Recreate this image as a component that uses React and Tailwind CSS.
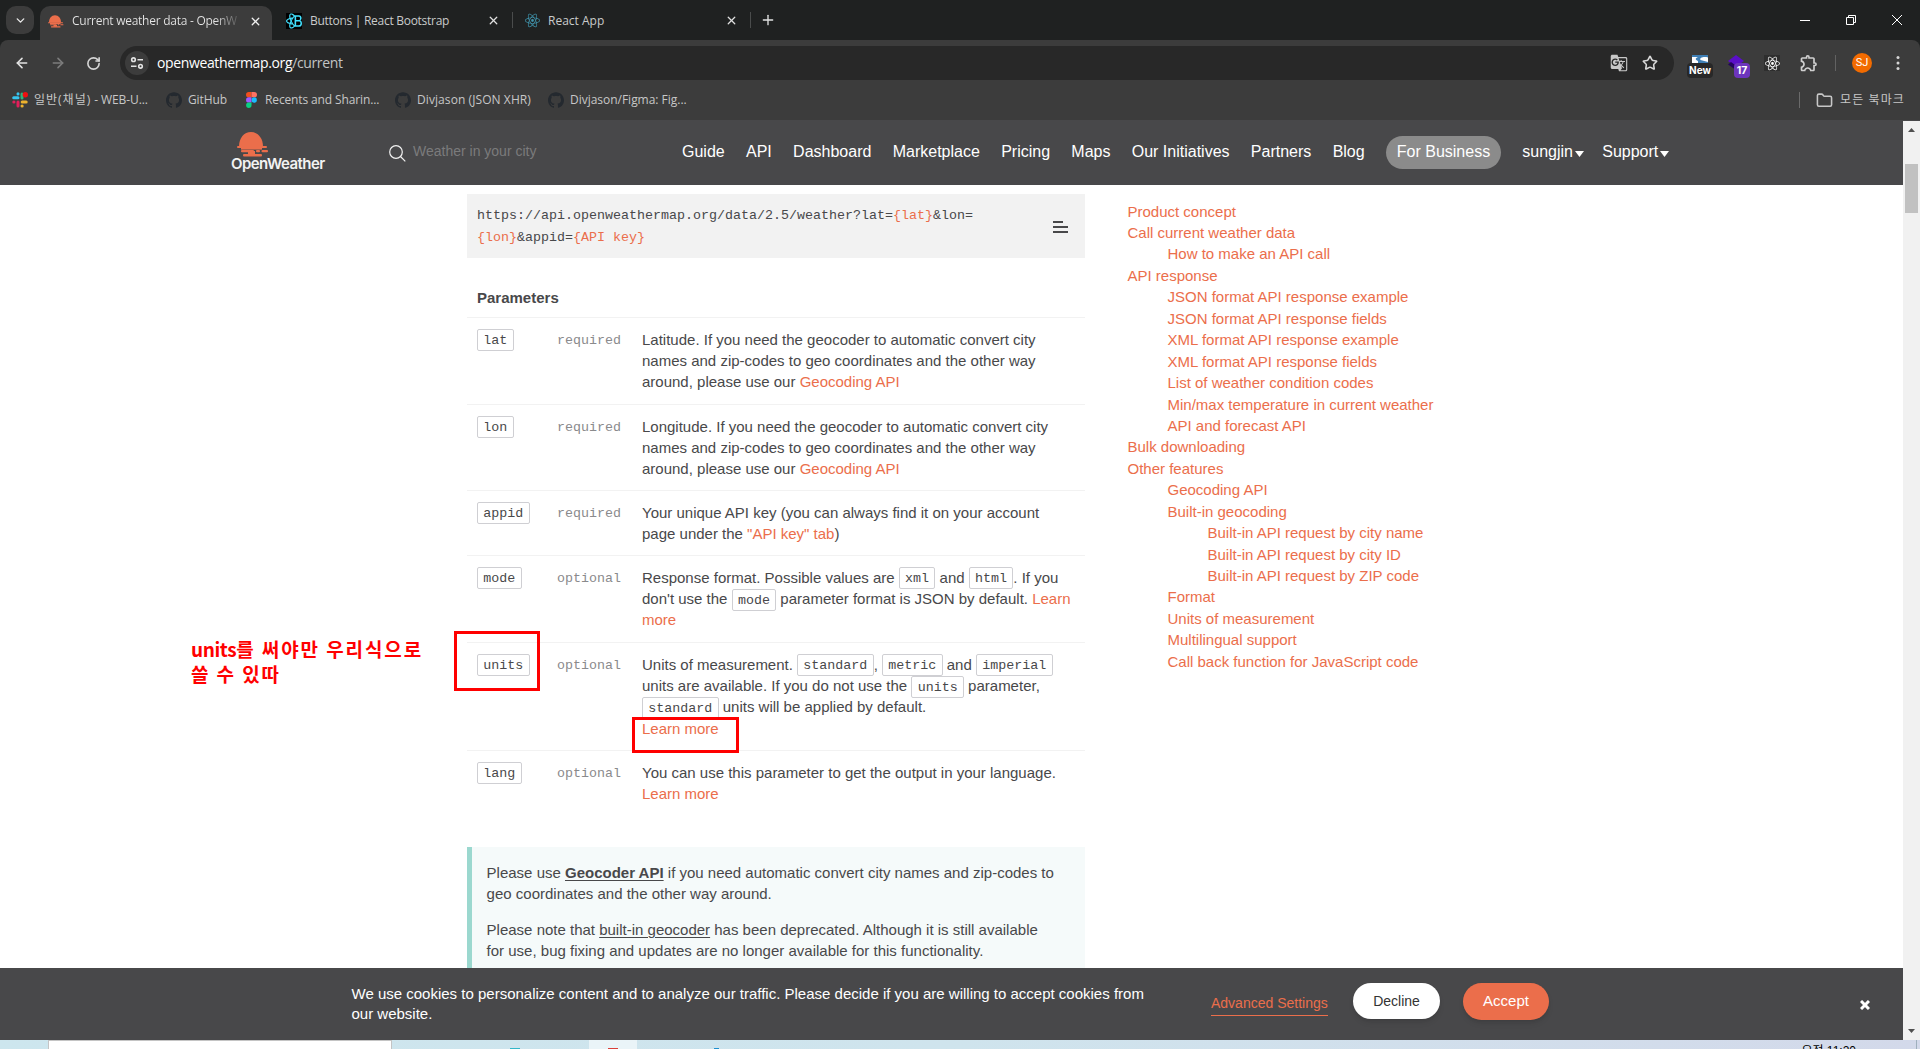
import React from "react";
import { ArrowLeft, ArrowRight, RotateCw, ChevronDown, Star, Folder, X, Plus } from "lucide-react";
import { SiReact, SiReactbootstrap, SiGithub } from "react-icons/si";
import { MdGTranslate, MdOutlineExtension } from "react-icons/md";

const UI = "font-['Open_Sans','Noto_Sans_CJK_KR',sans-serif]";

function Sun({ className }) {
  return (
    <svg className={className} viewBox="0 0 32 25" fill="#eb6e4b">
      <path d="M2 14.500C2 6 7 0 14 0s12 6 12 14.500z" />
      <rect x="0" y="14" width="30" height="2" rx="1" />
      <rect x="4" y="15" width="21" height="2.600" />
      <rect x="4" y="18" width="13" height="2.200" rx="1" />
      <rect x="19" y="18" width="4" height="2.200" rx="1" />
      <rect x="24.500" y="18" width="6.500" height="2.200" rx="1" />
      <rect x="11" y="19" width="7" height="4" />
      <rect x="6" y="22" width="19" height="2.400" rx="1" />
    </svg>
  );
}

function Slack() {
  return (
    <svg className="h-4 w-4" viewBox="0 0 16 16" strokeWidth="3" strokeLinecap="round">
      <path d="M6 1.800v.2M6 5.800H1.700M6 5.800H2" stroke="#36c5f0" />
      <path d="M10 6V2" stroke="#2eb67d" />
      <path d="M10.200 10h4" stroke="#ecb22e" />
      <path d="M6 10v4M1.800 10h.2" stroke="#e01e5a" />
      <path d="M10 14h.2" stroke="#ecb22e" />
      <circle cx="13.300" cy="2.800" r="2.700" fill="#f01010" />
    </svg>
  );
}

function Tune() {
  return (
    <svg className="h-4 w-4" viewBox="0 0 16 16" fill="none" stroke="#e3e3e3" strokeWidth="1.600">
      <circle cx="4.500" cy="4.700" r="1.800" />
      <path d="M8.500 4.700h5.500M2 11.300h5.500" />
      <circle cx="11.500" cy="11.300" r="1.800" />
    </svg>
  );
}

function Tab({ icon, title, width, tracking }) {
  return (
    <div className={`flex h-full items-center pt-px ${width}`}>
      <span className="flex w-4 shrink-0 justify-center">{icon}</span>
      <span className={`ml-2 flex-1 whitespace-nowrap text-[12px] text-[#c9cbcb] ${tracking}`}>{title}</span>
      <X className="h-[13px] w-[13px] text-[#e0e0e0]" strokeWidth={2.4} />
    </div>
  );
}

function TabStrip() {
  return (
    <div className="flex h-10 bg-[#1f2121]">
      <div className="ml-[6px] mt-[6px] flex h-7 w-7 items-center justify-center rounded-[10px] bg-[#3c3c3c]">
        <ChevronDown className="h-[13px] w-[13px] text-[#e8e8e8]" strokeWidth={2.6} />
      </div>
      <div className="ml-[6px] mt-[6px] flex h-[34px] w-[232px] items-center rounded-t-[10px] bg-[#3c3c3c] pb-[4px] pl-2 pr-[10px]">
        <Sun className="h-[13px] w-4" />
        <span className="ml-2 w-[168px] whitespace-nowrap bg-gradient-to-r from-[#e6e6e6] from-85% to-[#4c4c4c] bg-clip-text text-[12px] tracking-[-0.26px] text-transparent">
          Current weather data - OpenW
        </span>
        <X className="ml-[9px] h-[13px] w-[13px] shrink-0 text-[#f0f0f0]" strokeWidth={2.4} />
      </div>
      <div className="ml-[14px] flex">
        <Tab icon={<span className="flex h-4 w-4 items-center justify-center bg-black"><SiReactbootstrap className="h-4 w-4 text-[#41e0fd]" /></span>} title="Buttons | React Bootstrap" width="w-[214px]" tracking="tracking-[-0.28px]" />
        <div className="ml-[12px] mt-3 h-4 w-px bg-[#4a4c4c]" />
        <div className="w-[11px]" />
        <Tab icon={<SiReact className="h-[15px] w-[15px] text-[#3f93ab]" />} title="React App" width="w-[214px]" tracking="tracking-[0px]" />
        <div className="ml-[12px] mt-3 h-4 w-px bg-[#4a4c4c]" />
        <Plus className="ml-[9px] mt-3 h-4 w-4 text-[#e3e3e3]" />
      </div>
      <div className="ml-auto flex h-full items-center gap-[36px] pr-[18px] text-white">
        <svg className="h-[10px] w-[10px]" viewBox="0 0 10 10"><path d="M0 5.500h10" stroke="currentColor" /></svg>
        <svg className="h-[10px] w-[10px]" viewBox="0 0 10 10" fill="none" stroke="currentColor"><path d="M.5 2.500h7v7h-7zM2.500 2.500v-2h7v7h-2" /></svg>
        <svg className="h-[10px] w-[10px]" viewBox="0 0 10 10" stroke="currentColor"><path d="M0 0l10 10M10 0L0 10" /></svg>
      </div>
    </div>
  );
}

function Toolbar() {
  return (
    <div className="bg-[#1f2121]">
      <div className="flex h-[46px] items-center rounded-t-[8px] bg-[#3c3c3c] pl-[14px]">
        <ArrowLeft className="h-4 w-4 text-[#e3e3e3]" strokeWidth={2.4} />
        <ArrowRight className="ml-5 h-4 w-4 text-[#7c7c7c]" strokeWidth={2.4} />
        <RotateCw className="ml-5 h-[15px] w-[15px] text-[#d5d5d5]" strokeWidth={2.6} />
        <div className="ml-[19px] flex h-[34px] w-[1554px] items-center rounded-full bg-[#282828] pl-[5px]">
          <span className="flex h-6 w-6 items-center justify-center rounded-full bg-[#3c3c3c]"><Tune /></span>
          <span className="ml-[8px] text-[14px] leading-5 tracking-[-0.37px] text-white">
            openweathermap.org<span className="text-[#c2c4c4]">/current</span>
          </span>
          <MdGTranslate className="ml-auto h-[18px] w-[18px] text-[#c7c7c7]" />
          <Star className="ml-[14px] mr-[16px] h-[16px] w-[16px] text-[#d8d8d8]" strokeWidth={2.4} />
        </div>
        <div className="relative ml-[18px] h-[17px] w-4">
          <svg className="h-4 w-4" viewBox="0 0 16 16"><rect width="16" height="16" fill="#3f7fb5" /><path d="M0 2h6c-3 1-3 3 0 4v4H0zM16 2.500C12 1.500 7 2.500 8.500 5L16 7z" fill="#fff" /></svg>
          <span className="absolute left-[-5px] top-[8px] h-[15px] w-[26px] rounded-[4px] bg-[#282828] text-center font-['Inter',sans-serif] text-[10px] font-bold leading-[15px] text-white">New</span>
        </div>
        <div className="relative ml-[20px] h-[17px] w-4">
          <svg className="h-4 w-4" viewBox="0 0 16 16"><path d="M8 0l8 6-8 6-8-6z" fill="#5a0fc8" /><path d="M0 9.500L8 15l3-2-8-6z" fill="#22045c" /></svg>
          <span className="absolute left-[6px] top-[8px] h-[15px] w-4 rounded-[4px] bg-[#6d35bd] text-center font-['Inter',sans-serif] text-[10.500px] font-bold leading-[15px] text-white">17</span>
        </div>
        <span className="ml-5 flex h-4 w-4 items-center justify-center bg-[#2e2e2e]"><SiReact className="h-[15px] w-[15px] text-white" /></span>
        <MdOutlineExtension className="ml-[19px] h-5 w-5 text-[#d0d0d0]" />
        <span className="ml-[16px] h-4 w-px bg-[#626262]" />
        <span className="ml-[16px] flex h-5 w-5 items-center justify-center rounded-full bg-[#f26b00] font-['Roboto',sans-serif] text-[11px] text-white">SJ</span>
        <svg className="ml-[18px] h-4 w-4" viewBox="0 0 16 16" fill="#d6d6d6"><circle cx="8" cy="2.500" r="1.500" /><circle cx="8" cy="8" r="1.500" /><circle cx="8" cy="13.500" r="1.500" /></svg>
      </div>
    </div>
  );
}

function Bookmark({ icon, width, tracking, children }) {
  return (
    <div className={`flex items-center ${width}`}>
      <span className="flex w-4 justify-center">{icon}</span>
      <span className={`ml-[6px] whitespace-nowrap text-[12px] leading-4 text-[#c7c7c7] ${tracking}`}>{children}</span>
    </div>
  );
}

function Bookmarks() {
  const gh = <SiGithub className="h-4 w-4 text-[#24292f]" />;
  return (
    <div className="flex h-[34px] items-center bg-[#3c3c3c] pb-[6px] pl-3">
      <Bookmark icon={<Slack />} width="w-[154px]" tracking="tracking-[-0.1px]">
        <span className="tracking-[1px]">일반(채널)</span> - WEB-U...
      </Bookmark>
      <Bookmark icon={gh} width="w-[77px]" tracking="tracking-[-0.1px]">GitHub</Bookmark>
      <Bookmark icon={
        <svg className="h-4 w-[11px]" viewBox="0 0 11 16">
          <path d="M2.700 0H5.500v5.300H2.700a2.650 2.650 0 010-5.300z" fill="#f24e1e" /><path d="M5.500 0h2.800a2.650 2.650 0 010 5.300H5.500z" fill="#ff7262" />
          <path d="M2.700 5.300H5.500v5.300H2.700a2.650 2.650 0 010-5.300z" fill="#a259ff" /><circle cx="8.200" cy="8" r="2.650" fill="#1abcfe" />
          <path d="M2.700 10.600h2.800v2.700a2.700 2.700 0 11-2.800-2.700z" fill="#0acf83" />
        </svg>
      } width="w-[152px]" tracking="tracking-[-0.13px]">Recents and Sharin...</Bookmark>
      <Bookmark icon={gh} width="w-[153px]" tracking="tracking-[0.08px]">Divjason (JSON XHR)</Bookmark>
      <Bookmark icon={gh} width="w-[153px]" tracking="tracking-[-0.02px]">Divjason/Figma: Fig...</Bookmark>
      <span className="ml-auto h-4 w-px bg-[#6a6a6a]" />
      <Folder className="ml-[16px] h-[17px] w-[17px] text-[#c7c7c7]" strokeWidth={2.2} />
      <span className="ml-[7px] w-[80px] whitespace-nowrap text-[12px] leading-4 tracking-[1.1px] text-[#c7c7c7]">모든 북마크</span>
    </div>
  );
}

function Header() {
  const items = ["Guide", "API", "Dashboard", "Marketplace", "Pricing", "Maps", "Our Initiatives", "Partners", "Blog"];
  return (
    <header className="flex h-[65px] shrink-0 items-center bg-[#48484a] pb-px">
      <div className="ml-[231px] w-[94px]">
        <Sun className="ml-[6px] h-[25px] w-8" />
        <div className="-mt-px whitespace-nowrap font-['Inter',sans-serif] text-[15px] font-semibold leading-4 tracking-[-0.55px] text-[#f2f2f2]">OpenWeather</div>
      </div>
      <svg className="ml-[64px] mt-[2px] h-[17px] w-[17px]" viewBox="0 0 17 17" fill="none" stroke="#f2f2f2" strokeWidth="1.200"><circle cx="7" cy="7" r="6.300" /><path d="M11.500 11.500l4.800 4.800" /></svg>
      <span className="-mt-px ml-[7px] w-[269px] text-[14px] text-[#7b7b7c]">Weather in your city</span>
      <nav className="flex items-center gap-[21.300px] whitespace-nowrap text-[16px] text-white">
        {items.map((t) => <a key={t}>{t}</a>)}
        <a className="flex h-[33px] w-[115px] items-center justify-center rounded-full bg-[#8b8b8b]">For Business</a>
        <a className="flex items-center">sungjin<Caret /></a>
        <a className="-ml-[3px] flex items-center">Support<Caret /></a>
      </nav>
    </header>
  );
}

function Caret() {
  return <svg className="ml-[2px] mt-[3px] h-[6px] w-[9px]" viewBox="0 0 9 6"><path d="M0 0h9L4.500 6z" fill="#fff" /></svg>;
}

function Chip({ children }) {
  return <code className="relative top-[-1px] rounded-[2px] border border-[#cfcfd3] bg-white px-[5.300px] py-[2.500px] font-['Liberation_Mono',monospace] text-[13.333px] leading-[0]">{children}</code>;
}

function A({ children }) {
  return <a className="text-[#eb6e4b]">{children}</a>;
}

function Row({ name, kind, height, children }) {
  return (
    <div className={`flex border-t border-[#f2f2f2] pl-[10px] pt-[10.600px] ${height}`}>
      <div className="w-[80px]"><Chip>{name}</Chip></div>
      <div className="w-[85px] pt-px font-['Liberation_Mono',monospace] text-[13.333px] text-[#8a8a8c]">{kind}</div>
      <div className="whitespace-nowrap">{children}</div>
    </div>
  );
}

const toc = [
  [0, "Product concept"], [0, "Call current weather data"], [1, "How to make an API call"], [0, "API response"],
  [1, "JSON format API response example"], [1, "JSON format API response fields"], [1, "XML format API response example"],
  [1, "XML format API response fields"], [1, "List of weather condition codes"], [1, "Min/max temperature in current weather"],
  [1, "API and forecast API"], [0, "Bulk downloading"], [0, "Other features"], [1, "Geocoding API"], [1, "Built-in geocoding"],
  [2, "Built-in API request by city name"], [2, "Built-in API request by city ID"], [2, "Built-in API request by ZIP code"],
  [1, "Format"], [1, "Units of measurement"], [1, "Multilingual support"], [1, "Call back function for JavaScript code"],
];
const indent = ["pl-0", "pl-10", "pl-20"];

function Content() {
  return (
    <main className="flex min-h-0 flex-1 overflow-hidden bg-white pl-[467px] text-[15px] leading-[21.430px] text-[#48484a]">
      <div className="w-[618px] shrink-0 pt-[9px]">
        <div className="flex h-16 items-start justify-between bg-[#f2f2f2] pl-[10px] pr-[17px] pt-[11px]">
          <div className="whitespace-nowrap font-['Liberation_Mono',monospace] text-[13.333px] leading-[22px]">
            https://api.openweathermap.org/data/2.5/weather?lat=<A>{"{lat}"}</A>&amp;lon=<br />
            <A>{"{lon}"}</A>&amp;appid=<A>{"{API key}"}</A>
          </div>
          <div className="mt-[16px] flex w-[15px] flex-col gap-[3px]">
            <i className="h-[2px] w-[10px] bg-[#48484a]" /><i className="h-[2px] bg-[#48484a]" /><i className="h-[2px] bg-[#48484a]" />
          </div>
        </div>
        <div className="flex h-[59px] items-end pb-[9px] pl-[10px] font-bold">Parameters</div>
        <Row name="lat" kind="required" height="h-[87px]">
          Latitude. If you need the geocoder to automatic convert city<br />names and zip-codes to geo coordinates and the other way<br />around, please use our <A>Geocoding API</A>
        </Row>
        <Row name="lon" kind="required" height="h-[86px]">
          Longitude. If you need the geocoder to automatic convert city<br />names and zip-codes to geo coordinates and the other way<br />around, please use our <A>Geocoding API</A>
        </Row>
        <Row name="appid" kind="required" height="h-[65px]">
          Your unique API key (you can always find it on your account<br />page under the <A>"API key" tab</A>)
        </Row>
        <Row name="mode" kind="optional" height="h-[87px]">
          Response format. Possible values are <Chip>xml</Chip> and <Chip>html</Chip>. If you<br />don't use the <Chip>mode</Chip> parameter format is JSON by default. <A>Learn</A><br /><A>more</A>
        </Row>
        <Row name="units" kind="optional" height="h-[108px]">
          Units of measurement. <Chip>standard</Chip>, <Chip>metric</Chip> and <Chip>imperial</Chip><br />units are available. If you do not use the <Chip>units</Chip> parameter,<br /><Chip>standard</Chip> units will be applied by default.<br /><A>Learn more</A>
        </Row>
        <Row name="lang" kind="optional" height="h-[97px]">
          You can use this parameter to get the output in your language.<br /><A>Learn more</A>
        </Row>
        <div className="h-[200px] whitespace-nowrap border-l-[5px] border-[#9bd8cf] bg-[#f5fafa] pl-[14.600px] pt-[15px]">
          <p>Please use <b className="underline underline-offset-2">Geocoder API</b> if you need automatic convert city names and zip-codes to<br />geo coordinates and the other way around.</p>
          <p className="mt-[14px]">Please note that <u className="underline-offset-2">built-in geocoder</u> has been deprecated. Although it is still available<br />for use, bug fixing and updates are no longer available for this functionality.</p>
        </div>
      </div>
      <ul className="ml-[42.500px] whitespace-nowrap pt-[15.600px]">
        {toc.map(([l, t]) => <li key={t} className={indent[l]}><A>{t}</A></li>)}
      </ul>
    </main>
  );
}

function CookieBar() {
  return (
    <div className="flex h-[72px] shrink-0 bg-[#48484a] pl-[351.500px] text-[15px] text-white">
      <p className="w-[859.500px] whitespace-nowrap pt-[16px] leading-5">
        We use cookies to personalize content and to analyze our traffic. Please decide if you are willing to accept cookies from<br />our website.
      </p>
      <a className="mt-[26px] h-[22px] w-[117px] whitespace-nowrap border-b border-[#eb6e4b] text-[14px] leading-[18px] text-[#eb6e4b]">Advanced Settings</a>
      <button className="ml-[25px] mt-[15px] h-[36px] w-[87px] rounded-full bg-white text-[14px] text-[#333] shadow-md">Decline</button>
      <button className="ml-[23px] mt-[15px] h-[37px] w-[86px] rounded-full bg-[#eb6e4b] text-[15px] shadow-md">Accept</button>
      <svg className="ml-[311px] mt-[32px] h-[10px] w-[10px]" viewBox="0 0 10 10" stroke="#fff" strokeWidth="3"><path d="M1 1l8 8M9 1L1 9" /></svg>
    </div>
  );
}

function Scrollbar() {
  return (
    <div className="flex w-[17px] shrink-0 flex-col items-center border-t border-[#48484a] bg-[#f1f1f1]">
      <svg className="mt-[7px] h-[4px] w-[7px]" viewBox="0 0 7 4"><path d="M3.500 0L7 4H0z" fill="#505050" /></svg>
      <div className="mt-[32px] h-[49px] w-[13px] bg-[#c1c1c1]" />
      <svg className="mb-[7px] mt-auto h-[4px] w-[7px]" viewBox="0 0 7 4"><path d="M3.500 4L7 0H0z" fill="#505050" /></svg>
    </div>
  );
}

function Taskbar() {
  return (
    <div className="flex h-[9px] items-start overflow-hidden bg-gradient-to-r from-[#cde6ee] via-[#cfe4ed] to-[#d3d9ea]">
      <div className="ml-12 h-[9px] w-[344px] border border-b-0 border-[#c4c4c4] bg-white" />
      <i className="ml-[118px] mt-[8px] h-px w-[10px] bg-[#33b6c9]" />
      <div className="ml-[69px] flex h-[9px] w-12 justify-center bg-[#eaf4f8]"><i className="mt-[8px] h-px w-[10px] bg-[#d9403a]" /></div>
      <i className="ml-[77px] mt-[8px] h-px w-[5px] bg-[#1e90cf]" />
      <div className="ml-auto mr-[61px] mt-[5px] whitespace-nowrap font-['Liberation_Sans','Noto_Sans_CJK_KR',sans-serif] text-[12px] leading-3 text-black">오전 11:20</div>
      <div className="-ml-px mr-[3px] h-[9px] w-px bg-[#9fb0bd]" />
    </div>
  );
}

export default function App() {
  return (
    <div className="relative flex h-[1049px] w-[1920px] flex-col overflow-hidden font-['Liberation_Sans','Noto_Sans_CJK_KR',sans-serif]">
      <div className={UI}>
        <TabStrip />
        <Toolbar />
        <Bookmarks />
      </div>
      <div className="flex min-h-0 flex-1">
        <div className="flex w-[1903px] flex-col">
          <Header />
          <Content />
          <CookieBar />
        </div>
        <Scrollbar />
      </div>
      <Taskbar />
      <div className="absolute left-[191px] top-[636px] whitespace-nowrap font-['Noto_Sans_CJK_KR',sans-serif] text-[19px] font-bold leading-[25px] tracking-[1.900px] text-[#ff0000]">
        <span className="tracking-[-0.4px]">units</span>를 써야만 우리식으로<br />쓸 수 있따
      </div>
      <div className="absolute left-[454px] top-[631px] h-[60px] w-[86px] border-3 border-[#ff0000]" />
      <div className="absolute left-[632px] top-[717px] h-[36px] w-[107px] border-3 border-[#ff0000]" />
    </div>
  );
}
